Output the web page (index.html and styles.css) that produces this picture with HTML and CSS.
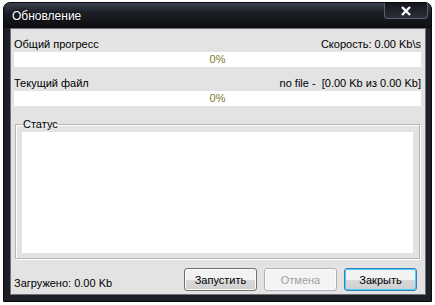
FILE: index.html
```html
<!DOCTYPE html>
<html lang="ru">
<head>
    <meta charset="UTF-8">
    <title>Обновление</title>
    <link rel="stylesheet" href="styles.css">
</head>
<body>

<div class="window">
    <div class="titlebar">
        <span class="title">Обновление</span>
        <span class="close-btn">
            <svg width="12" height="10" viewBox="0 0 12 10">
                <path d="M2 1 L10 9 M10 1 L2 9" stroke="#fff" stroke-width="2.4"/>
            </svg>
        </span>
    </div>

    <div class="client">
        <!-- общий прогресс -->
        <div class="row">
            <span>Общий прогресс</span>
            <span>Скорость: 0.00 Kb\s</span>
        </div>
        <div class="progress">0%</div>

        <!-- текущий файл -->
        <div class="row second">
            <span>Текущий файл</span>
            <span>no file -&nbsp; [0.00 Kb из 0.00 Kb]</span>
        </div>
        <div class="progress">0%</div>

        <!-- статус -->
        <fieldset class="status">
            <legend>Статус</legend>
            <div class="status-box"></div>
        </fieldset>

        <div class="bottom">
            <span class="loaded">Загружено: 0.00 Kb</span>
            <div class="buttons">
                <button>Запустить</button>
                <button disabled>Отмена</button>
                <button class="focused">Закрыть</button>
            </div>
        </div>
    </div>
</div>

</body>
</html>
```

FILE: styles.css
```css
body {
    margin: 0;
    background: #fff;
    font-family: "Liberation Sans", Arial, sans-serif;
    font-size: 11px;
}
.window {
    margin: 2px 0 0 3px;
    width: 429px;
    height: 300px;
    background: #1c1f26;
    border: 1px solid #0a0a0c;
    border-radius: 7px 7px 0 0;
    box-sizing: border-box;
    display: flex;
    flex-direction: column;
    padding: 0 5px 6px 6px;
}
.titlebar {
    height: 25px;
    display: flex;
    align-items: flex-start;
    justify-content: space-between;
    background: linear-gradient(#3b414f, #1b1e25 40%, #0c0d10);
    margin: 0 -5px 0 -6px;
    padding: 0 5px 0 8px;
    border-radius: 6px 6px 0 0;
}
.title {
    color: #fff;
    font-size: 12px;
    margin-top: 6px;
    text-shadow: 0 0 3px #000;
}
.close-btn {
    width: 42px;
    height: 15px;
    display: flex;
    align-items: center;
    justify-content: center;
    background: linear-gradient(#15171c, #2a2f3a);
    border: 1px solid #5a606e;
    border-top: none;
    border-radius: 0 0 4px 4px;
    margin-right: -2px;
}
.client {
    flex: 1;
    background: #e3e3e3;
    border: 1px solid #6f7378;
    padding: 4px 4px 0 3px;
    display: flex;
    flex-direction: column;
}
.row {
    display: flex;
    justify-content: space-between;
    height: 15px;
    align-items: center;
    margin-top: 3px;
    color: #000;
}
.row.second {
    margin-top: 8px;
}
.progress {
    background: #fff;
    height: 15px;
    margin-top: 1px;
    text-align: center;
    line-height: 15px;
    color: #7a7a2a;
}
.status {
    margin: 13px 0 0 1px;
    padding: 0 6px 5px 6px;
    border: 1px solid #b5b5b5;
    box-shadow: inset 1px 1px 0 #fff, 1px 1px 0 #fff;
    width: 405px;
    box-sizing: border-box;
}
.status legend {
    padding: 0;
    margin-left: 1px;
    line-height: 10px;
}
.status-box {
    background: #fff;
    height: 121px;
    margin-top: 3px;
}
.bottom {
    display: flex;
    justify-content: space-between;
    align-items: center;
    margin-top: 9px;
}
.loaded {
    margin-top: 6px;
}
.buttons {
    display: flex;
    gap: 7px;
    margin-right: 4px;
}
button {
    width: 73px;
    height: 23px;
    font-family: inherit;
    font-size: 11px;
    color: #000;
    background: linear-gradient(#f2f2f2 50%, #d9d9d9 51%, #cfcfcf);
    border: 1px solid #707070;
    border-radius: 3px;
    box-shadow: inset 0 0 0 1px #fbfbfb;
    padding: 0;
}
button:disabled {
    color: #a0a0a0;
    background: #f4f4f4;
    border-color: #adb2b5;
}
button.focused {
    border-color: #3c7fb1;
    box-shadow: inset 0 0 0 1px #48d1f8;
}
```
